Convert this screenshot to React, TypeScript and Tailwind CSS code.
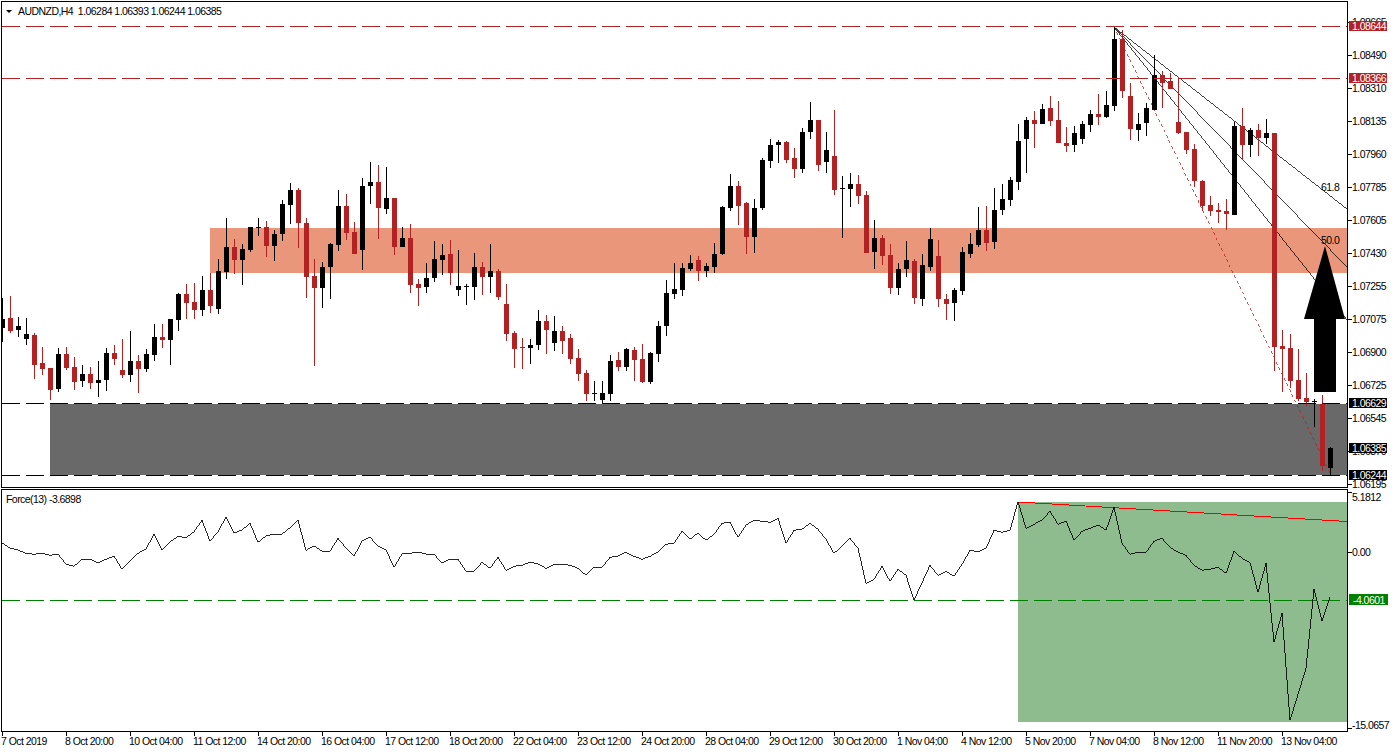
// AUDNZD H4 chart: candles are [colour, high, body top, body bottom, low] in page pixels, 8px apart from x=2
type Candle = ["b" | "r", number, number, number, number];

const candles: Candle[] = [
  ["b", 298, 319, 328, 342], ["r", 296, 318, 331, 333], ["b", 317, 326, 330, 337], ["b", 318, 334, 339, 345],
  ["r", 333, 335, 365, 379], ["r", 347, 363, 369, 375], ["r", 368, 368, 390, 400], ["b", 348, 354, 389, 392],
  ["r", 347, 354, 368, 370], ["r", 357, 367, 382, 390], ["b", 365, 374, 381, 387], ["r", 367, 374, 383, 389],
  ["b", 361, 380, 383, 397], ["b", 348, 353, 380, 391], ["r", 345, 353, 359, 365], ["r", 339, 370, 375, 378],
  ["b", 331, 361, 375, 382], ["r", 355, 361, 369, 393], ["b", 349, 354, 369, 372], ["b", 324, 337, 355, 361],
  ["r", 324, 337, 340, 348], ["b", 319, 319, 340, 365], ["b", 293, 294, 320, 331], ["r", 284, 294, 303, 319],
  ["r", 283, 302, 310, 319], ["b", 276, 290, 310, 316], ["r", 273, 290, 306, 313], ["b", 259, 271, 309, 314],
  ["b", 218, 247, 272, 279], ["r", 239, 247, 260, 274], ["b", 244, 249, 260, 285], ["b", 227, 227, 250, 252],
  ["b", 218, 227, 228, 236], ["r", 221, 227, 246, 257], ["b", 230, 234, 246, 261], ["b", 200, 204, 234, 241],
  ["b", 183, 190, 205, 224], ["r", 188, 190, 223, 248], ["r", 218, 223, 277, 298], ["r", 259, 276, 288, 366],
  ["b", 262, 267, 288, 308], ["b", 243, 244, 267, 299], ["b", 190, 206, 245, 251], ["r", 194, 206, 233, 240],
  ["r", 222, 232, 254, 254], ["b", 178, 186, 250, 270], ["b", 162, 182, 186, 204], ["r", 165, 182, 208, 239],
  ["b", 167, 198, 209, 214], ["r", 198, 198, 247, 255], ["b", 227, 238, 247, 247], ["r", 224, 238, 285, 293],
  ["r", 279, 284, 288, 306], ["b", 263, 278, 287, 293], ["b", 241, 259, 278, 282], ["b", 244, 255, 260, 275],
  ["r", 240, 254, 273, 285], ["b", 250, 286, 290, 296], ["b", 284, 286, 287, 305], ["b", 253, 267, 287, 300],
  ["r", 262, 267, 277, 295], ["b", 244, 271, 277, 293], ["r", 269, 271, 297, 300], ["r", 284, 304, 334, 341],
  ["r", 331, 333, 349, 368], ["r", 338, 347, 348, 369], ["b", 339, 345, 348, 364], ["b", 310, 321, 345, 350],
  ["r", 315, 321, 330, 354], ["b", 316, 331, 343, 351], ["r", 326, 331, 341, 354], ["r", 334, 338, 359, 364],
  ["r", 349, 358, 374, 381], ["r", 370, 373, 394, 401], ["b", 381, 393, 394, 401], ["b", 381, 393, 400, 404],
  ["b", 355, 361, 394, 401], ["r", 352, 360, 367, 371], ["b", 348, 349, 367, 371], ["r", 347, 350, 360, 381],
  ["r", 344, 359, 382, 383], ["b", 352, 353, 382, 384], ["b", 321, 326, 354, 362], ["b", 280, 293, 326, 336],
  ["b", 263, 289, 294, 299], ["b", 263, 268, 290, 296], ["b", 255, 263, 269, 271], ["r", 256, 260, 271, 281],
  ["b", 263, 266, 271, 277], ["b", 243, 254, 267, 273], ["b", 206, 207, 254, 255], ["b", 174, 186, 208, 211],
  ["r", 181, 186, 206, 225], ["r", 202, 203, 237, 254], ["b", 199, 208, 237, 253], ["b", 158, 160, 208, 210],
  ["b", 139, 145, 161, 168], ["b", 140, 142, 145, 163], ["r", 141, 142, 160, 163], ["r", 148, 158, 169, 178],
  ["b", 128, 132, 169, 173], ["b", 102, 120, 132, 139], ["r", 120, 120, 165, 171], ["b", 132, 150, 162, 173],
  ["r", 110, 156, 190, 195], ["b", 176, 188, 189, 238], ["b", 173, 184, 189, 207], ["r", 175, 184, 196, 204],
  ["r", 191, 195, 253, 253], ["b", 220, 238, 252, 269], ["r", 235, 238, 256, 265], ["r", 244, 255, 288, 294],
  ["b", 263, 269, 288, 295], ["b", 241, 260, 269, 277], ["r", 259, 261, 298, 304], ["b", 254, 265, 299, 306],
  ["b", 228, 239, 267, 271], ["r", 240, 256, 299, 307], ["r", 294, 299, 304, 320], ["b", 288, 290, 303, 321],
  ["b", 247, 252, 291, 295], ["b", 233, 244, 254, 258], ["b", 207, 230, 245, 247], ["r", 206, 230, 243, 251],
  ["b", 188, 210, 242, 249], ["b", 184, 199, 210, 215], ["b", 177, 180, 200, 206], ["b", 124, 141, 182, 190],
  ["b", 117, 120, 139, 173], ["r", 111, 120, 124, 148], ["b", 104, 109, 124, 124], ["r", 96, 108, 121, 126],
  ["r", 101, 120, 143, 143], ["r", 127, 143, 146, 152], ["b", 126, 133, 145, 152], ["b", 121, 124, 139, 144],
  ["b", 110, 114, 125, 132], ["r", 94, 114, 117, 125], ["b", 91, 105, 117, 118], ["b", 27, 39, 106, 111],
  ["r", 30, 39, 91, 98], ["r", 83, 96, 129, 140], ["b", 113, 124, 130, 141], ["b", 103, 108, 123, 136],
  ["b", 55, 75, 110, 110], ["r", 71, 75, 83, 108], ["r", 73, 81, 89, 89], ["r", 77, 122, 133, 134],
  ["r", 132, 132, 150, 154], ["r", 144, 149, 181, 187], ["r", 180, 181, 206, 211], ["r", 196, 205, 211, 216],
  ["r", 203, 210, 212, 223], ["r", 199, 211, 214, 230], ["b", 122, 126, 215, 215], ["r", 108, 126, 145, 159],
  ["b", 128, 130, 145, 157], ["r", 124, 130, 138, 156], ["b", 119, 133, 138, 144], ["r", 133, 133, 347, 371],
  ["r", 330, 346, 349, 392], ["r", 334, 348, 381, 388], ["r", 349, 380, 399, 401], ["r", 373, 398, 402, 406],
  ["b", 399, 401, 402, 427], ["r", 395, 404, 466, 471], ["b", 447, 448, 468, 475],
];

const force = [
  543, 548, 550, 553.3, 554.3, 553, 555.3, 554, 564, 566.3, 559, 559, 563, 559.3, 556, 569.3, 561, 553.3, 549, 534.3,
  550.3, 542, 536.3, 537.7, 531.7, 520.3, 541.3, 531.7, 517.3, 533, 530, 523.3, 542.3, 536, 534, 534, 527.7, 520.3,
  550.3, 546, 551.3, 551.3, 538.3, 548, 556.3, 541, 537.3, 546, 550, 567.3, 554, 553.3, 552, 554, 554.3, 563, 559, 559,
  571.3, 571.3, 562.3, 568.3, 557.3, 570.3, 566.3, 565.3, 562, 564, 568.3, 564.3, 564.3, 565.3, 568.3, 575.3, 567.3,
  567.3, 557.3, 556, 552.3, 556.3, 559.3, 556.3, 552, 544.3, 543, 531.3, 539.3, 533, 540.3, 534.3, 523.3, 522.3, 537.3,
  525, 520.3, 521.3, 522.3, 518.3, 543.3, 530.3, 529.3, 523.3, 529.3, 539.3, 553.3, 546.3, 538.3, 548.3, 583.3, 579.3,
  566.3, 581.3, 569.3, 575.3, 600.3, 582.7, 565.3, 575.3, 571.3, 576.3, 564.3, 550.3, 551.7, 548.3, 530.3, 532.3, 530.3,
  501.7, 528.3, 524.3, 520, 511.3, 524.3, 521, 540.3, 531.3, 528.3, 525, 530.3, 507.3, 543.3, 554.3, 552.3, 552.3, 541.3,
  538.3, 547.3, 552.3, 555.3, 565.3, 570.3, 569.3, 567.3, 573.3, 551.3, 558.3, 562.7, 592.3, 563.3, 642.3, 613.3, 720.3,
  694.3, 668.3, 589.3, 621.3, 597.3,
];

const priceTicks: [string, number][] = [
  ["1.08665", 22], ["1.08490", 55], ["1.08310", 88], ["1.08135", 121], ["1.07960", 154], ["1.07785", 187],
  ["1.07605", 220], ["1.07430", 253], ["1.07255", 286], ["1.07075", 319], ["1.06900", 352], ["1.06725", 385],
  ["1.06545", 418], ["1.06370", 451], ["1.06195", 484],
];

const priceFlags: { text: string; y: number; bg: string }[] = [
  { text: "1.08644", y: 26, bg: "#b22222" },
  { text: "1.08366", y: 78, bg: "#b22222" },
  { text: "1.06629", y: 403, bg: "#000000" },
  { text: "1.06385", y: 448, bg: "#000000" },
  { text: "1.06244", y: 475, bg: "#000000" },
];

const timeLabels = [
  "7 Oct 2019", "8 Oct 20:00", "10 Oct 04:00", "11 Oct 12:00", "14 Oct 20:00", "16 Oct 04:00", "17 Oct 12:00",
  "18 Oct 20:00", "22 Oct 04:00", "23 Oct 12:00", "24 Oct 20:00", "28 Oct 04:00", "29 Oct 12:00", "30 Oct 20:00",
  "1 Nov 04:00", "4 Nov 12:00", "5 Nov 20:00", "7 Nov 04:00", "8 Nov 12:00", "11 Nov 20:00", "13 Nov 04:00",
];

function DashLine({ y, color }: { y: number; color: string }) {
  return (
    <line x1={2} x2={1347} y1={y + 0.5} y2={y + 0.5} stroke={color} strokeDasharray="18 6" shapeRendering="crispEdges" />
  );
}

function Candles() {
  return (
    <g shapeRendering="crispEdges">
      {candles.map(([c, high, top, bottom, low], i) => {
        const x = 2 + i * 8;
        const fill = c === "r" ? "#b22222" : "#000000";
        return (
          <g key={i} fill={fill}>
            <rect x={x} y={high} width={1} height={low - high} />
            <rect x={x - 2} y={top} width={5} height={Math.max(bottom - top, 1)} />
          </g>
        );
      })}
    </g>
  );
}

export default function App() {
  return (
    <div className="flex h-[752px] w-[1393px] flex-col overflow-hidden bg-white pl-px pt-px font-['Liberation_Sans',Arial,sans-serif] text-[10.5px] tracking-[-0.55px] text-black">
      {/* price pane */}
      <div className="flex h-[487px]">
        <div className="relative w-[1347px] shrink-0 border border-black">
          <svg className="block h-full w-full" viewBox="2 2 1345 485">
            <rect x={210} y={228} width={1137} height={45} fill="#e9967a" />
            <rect x={50} y={404} width={1297} height={71} fill="#696969" />
            {/* fibonacci fan sits behind the candles */}
            <g shapeRendering="crispEdges" strokeWidth={0.75}>
              <line x1={1114} y1={27} x2={1347} y2={209} stroke="#000000" />
              <line x1={1114} y1={27} x2={1347} y2={267} stroke="#000000" />
              <line x1={1114} y1={27} x2={1347} y2={320} stroke="#000000" />
              <line x1={1114} y1={27} x2={1330} y2={473} stroke="#b22222" strokeDasharray="3 3" />
            </g>
            <text x={1321} y={191} fontSize={10.5}>61.8</text>
            <text x={1321} y={244} fontSize={10.5}>50.0</text>
            <Candles />
            <DashLine y={26} color="#b22222" />
            <DashLine y={78} color="#b22222" />
            <DashLine y={403} color="#000000" />
            <DashLine y={475} color="#000000" />
            <polygon
              points="1325,246 1345,319 1336,319 1336,392 1314,392 1314,319 1304,319"
              fill="#000000"
            />
          </svg>
          <div className="absolute left-[4px] top-[3px] flex items-center gap-[6px] whitespace-nowrap leading-3">
            <span className="h-0 w-0 border-x-[3px] border-t-[3px] border-x-transparent border-t-black" />
            <span>AUDNZD,H4&nbsp;&nbsp;1.06284 1.06393 1.06244 1.06385</span>
          </div>
        </div>
        <svg className="block h-[487px] w-[45px] overflow-visible" viewBox="1348 1 45 487">
          {priceTicks.map(([label, y]) => (
            <g key={label}>
              <rect x={1348} y={y} width={4} height={1} shapeRendering="crispEdges" />
              <text x={1352} y={y + 4} fontSize={10.5}>{label}</text>
            </g>
          ))}
          {priceFlags.map((f) => (
            <g key={f.text}>
              <rect x={1349} y={f.y - 5} width={38} height={10} fill={f.bg} shapeRendering="crispEdges" />
              <text x={1352} y={f.y + 4} fontSize={10.5} fill="#ffffff">{f.text}</text>
            </g>
          ))}
        </svg>
      </div>

      {/* force pane */}
      <div className="mt-px flex h-[243px]">
        <div className="relative w-[1347px] shrink-0 border border-black">
          <svg className="block h-full w-full" viewBox="2 490 1345 241">
            <rect x={1018} y={502} width={329} height={220} fill="#8fbc8f" />
            <DashLine y={600} color="#008000" />
            <line x1={1018} y1={502} x2={1347} y2={521.5} stroke="#ff0000" shapeRendering="crispEdges" />
            <polyline
              points={force.map((y, i) => `${2 + i * 8},${y}`).join(" ")}
              fill="none"
              stroke="#000000"
              strokeWidth={0.85}
              shapeRendering="crispEdges"
            />
          </svg>
          <div className="absolute left-[4px] top-[3px] whitespace-nowrap leading-3">Force(13) -3.6898</div>
        </div>
        <svg className="block h-[243px] w-[45px] overflow-visible" viewBox="1348 489 45 243">
          <rect x={1348} y={492} width={4} height={1} shapeRendering="crispEdges" />
          <text x={1352} y={501} fontSize={10.5}>5.1812</text>
          <rect x={1348} y={552} width={4} height={1} shapeRendering="crispEdges" />
          <text x={1352} y={556} fontSize={10.5}>0.00</text>
          <rect x={1349} y={594} width={39} height={11} fill="#008000" shapeRendering="crispEdges" />
          <text x={1353} y={604} fontSize={10.5} fill="#ffffff">-4.0601</text>
          <rect x={1348} y={728} width={4} height={1} shapeRendering="crispEdges" />
          <text x={1352} y={729} fontSize={10.5}>-15.0657</text>
        </svg>
      </div>

      {/* time axis */}
      <div className="flex">
        {timeLabels.map((t) => (
          <div key={t} className="flex w-16 shrink-0 flex-col whitespace-nowrap">
            <span className="ml-px h-1 w-px bg-black" />
            <span className="leading-[10px]">{t}</span>
          </div>
        ))}
      </div>
    </div>
  );
}
